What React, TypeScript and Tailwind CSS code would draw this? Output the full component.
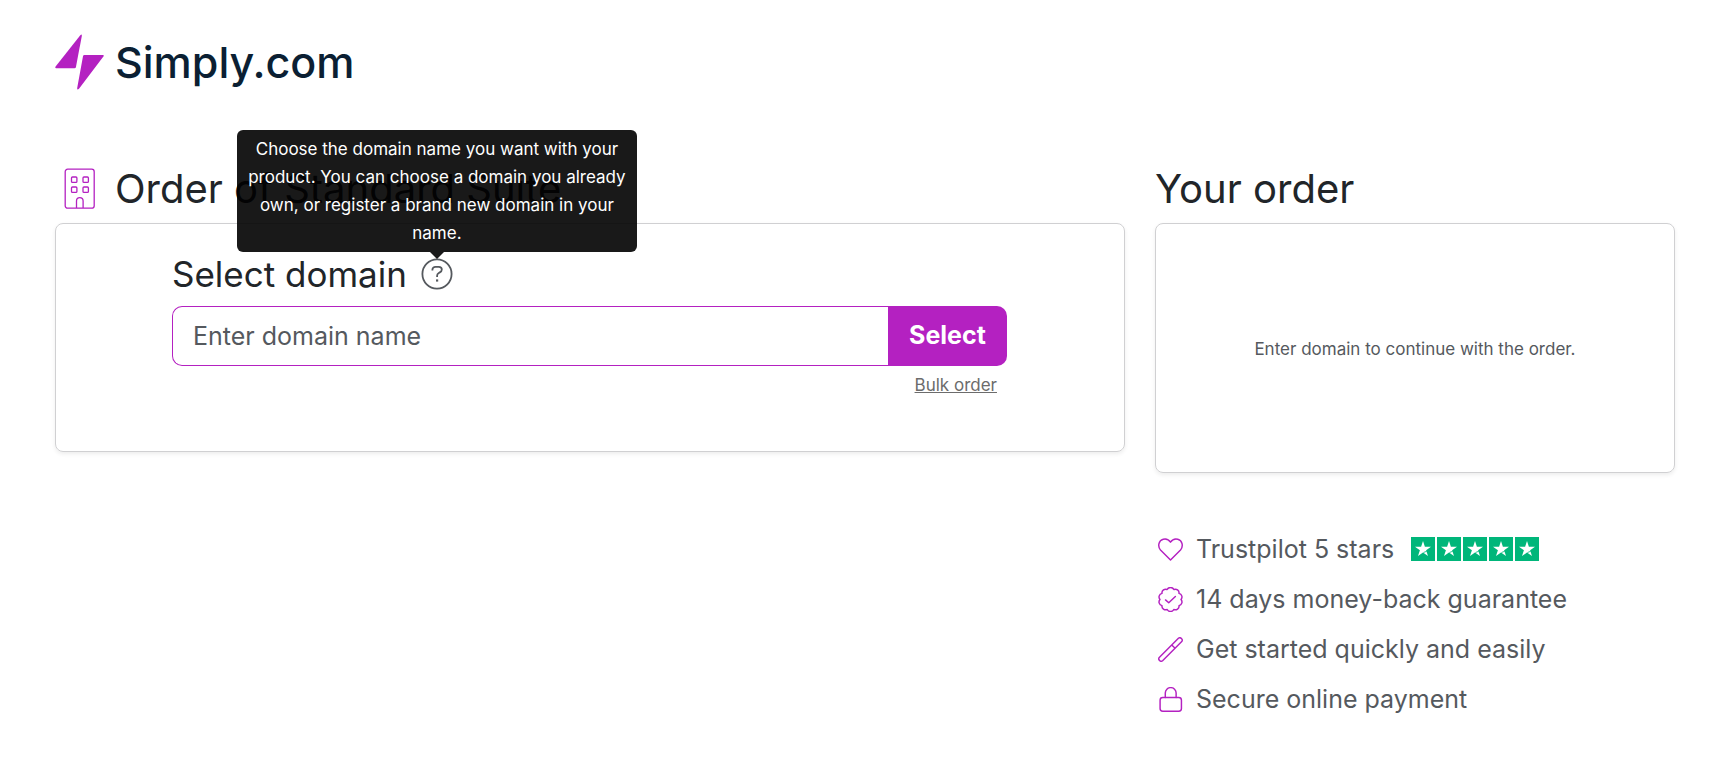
import { useState, type ReactNode } from 'react';

const iconProps = {
  viewBox: '0 0 24 24',
  fill: 'none',
  stroke: 'currentColor',
  strokeWidth: 1.4,
  strokeLinecap: 'round',
  strokeLinejoin: 'round',
  'aria-hidden': true,
} as const;

function LogoMark() {
  return (
    <svg viewBox="0 0 49 56" className="h-14 w-[49px] shrink-0 fill-[#b421c1]" aria-hidden="true">
      <path d="M25.3 1.2Q27 -.5 26.8 2L20.9 33.2Q20.6 34.2 19.5 34.2H1.2Q-.3 34 .6 32.6Z" />
      <path d="M29.4 21H47.8Q49.5 21.2 48.4 22.6L24 54.7Q22 56.4 22.2 54L28 22.2Q28.2 21 29.4 21Z" />
    </svg>
  );
}

function BuildingIcon() {
  return (
    <svg viewBox="0 0 32 42" className="h-[42px] w-8 shrink-0 text-[#b421c1]" fill="none" stroke="currentColor" strokeWidth="1.3" aria-hidden="true">
      <rect x="1.2" y="1.2" width="29" height="39" rx="2.5" />
      <rect x="7.5" y="9" width="5.4" height="5.4" rx="1" />
      <rect x="19" y="9" width="5.4" height="5.4" rx="1" />
      <rect x="7.5" y="19" width="5.4" height="5.4" rx="1" />
      <rect x="19" y="19" width="5.4" height="5.4" rx="1" />
      <path d="M12.5 40v-7a3.3 3.3 0 0 1 6.6 0v7" />
    </svg>
  );
}

function HeartIcon() {
  return (
    <svg {...iconProps} className="size-[25px]">
      <path d="M12 22 2.4 12.4C-.6 9 .6 3.2 5 2.1 8 1.3 10.7 3 12 5c1.3-2 4-3.7 7-2.9 4.4 1.1 5.6 6.9 2.6 10.3Z" />
    </svg>
  );
}

function BadgeIcon() {
  return (
    <svg {...iconProps} className="size-[25px]">
      <path d="M8.8 2.4A3.6 3.6 0 0 1 15.200 2.400 3.600 3.600 0 0 1 20.200 6.100 3.600 3.600 0 0 1 22.100 12 3.600 3.600 0 0 1 20.200 17.900 3.600 3.600 0 0 1 15.200 21.600 3.600 3.600 0 0 1 8.800 21.600 3.600 3.600 0 0 1 3.800 17.900 3.600 3.600 0 0 1 1.900 12 3.600 3.600 0 0 1 3.800 6.100 3.600 3.600 0 0 1 8.800 2.400Z" />
      <path d="m7.2 12.4 3.1 2.7 6.4-6" />
    </svg>
  );
}

function WandIcon() {
  return (
    <svg {...iconProps} className="size-[25px]">
      <path d="M1.2 19.6 19.6 1.2c2-1.5 4.7 1.2 3.2 3.2L4.4 22.8c-2 1.5-4.7-1.2-3.2-3.2ZM13.2 7.600l3.200 3.200" />
    </svg>
  );
}

function LockIcon() {
  return (
    <svg {...iconProps} className="size-[25px]">
      <rect x="2" y="10" width="20.5" height="13.2" rx="2.6" />
      <path d="M7 10V5.8a5.200 5.200 0 0 1 10.400 0V10" />
    </svg>
  );
}

function Stars() {
  return (
    <span className="ml-[17px] flex gap-[2px]" role="img" aria-label="5 out of 5 stars">
      {[1, 2, 3, 4, 5].map((n) => (
        <svg key={n} viewBox="0 0 24 24" className="size-6 bg-[#00b67a]" aria-hidden="true">
          <path fill="#fff" d="m12 4 1.9 5.700H20l-4.900 3.600 1.900 5.800-5-3.600-5 3.600 1.900-5.800L4 9.700h6.100Z" />
          <path stroke="#00b67a" strokeWidth=".8" d="m12.5 15.500 3.300-1.300" />
        </svg>
      ))}
    </span>
  );
}

function HelpTip({ text }: { text: string }) {
  return (
    <span className="relative flex">
      <button
        type="button"
        aria-label="Help"
        aria-describedby="domain-tip"
        className="flex size-8 text-[#55595e]"
      >
        <svg viewBox="0 0 32 32" className="size-8" fill="none" stroke="currentColor" strokeWidth="1.8" aria-hidden="true">
          <circle cx="16" cy="16" r="14.6" />
          <path d="M11.4 12.500v-.8c0-1.800 1.300-2.900 3.100-2.900h3.300c1.800 0 3 1.100 3 2.700 0 1.400-.7 2.200-2 2.900l-1 .6c-1.200.7-1.700 1.400-1.700 2.700v1.300" />
          <path d="M15 21.4h2.200v2.200H15z" fill="currentColor" stroke="none" />
        </svg>
      </button>
      <span
        id="domain-tip"
        role="tooltip"
        className="absolute bottom-full left-1/2 z-10 mb-[6px] w-[400px] -translate-x-1/2 rounded-md bg-black/90 px-2 py-[5px] text-center text-[17px] leading-7 font-normal text-white"
      >
        {text}
        <span className="absolute top-full left-1/2 -translate-x-1/2 border-x-[7px] border-t-[7px] border-x-transparent border-t-black/90" />
      </span>
    </span>
  );
}

const benefits: { icon: ReactNode; text: string; stars?: boolean }[] = [
  { icon: <HeartIcon />, text: 'Trustpilot 5 stars', stars: true },
  { icon: <BadgeIcon />, text: '14 days money-back guarantee' },
  { icon: <WandIcon />, text: 'Get started quickly and easily' },
  { icon: <LockIcon />, text: 'Secure online payment' },
];

export default function App() {
  const [domain, setDomain] = useState('');

  return (
    <div className="bg-white pt-[34px] pr-7 pb-10 pl-10 font-['Inter',sans-serif] text-[#212529]">
      <header className="px-[15px]">
        <a href="#" className="inline-flex items-center gap-[11px] text-[#0b1f33]">
          <LogoMark />
          <span className="text-[43px] leading-[54px] font-medium">Simply.com</span>
        </a>
      </header>

      <div className="mt-[69px] flex">
        <main className="w-2/3 px-[15px]">
          <div className="mb-[10px] flex h-12 items-center gap-[19px] pl-[9px]">
            <BuildingIcon />
            <h1 className="text-[40px] leading-[48px]">Order of Standard Suite</h1>
          </div>
          <section className="rounded-lg border border-[#d0d0d2] pt-[30px] pr-[117px] pb-[52px] pl-[116px] shadow-[0_2px_4px_rgba(0,0,0,0.075)]">
            <div className="flex items-center gap-[14px]">
              <h2 className="text-[35px] leading-10">
                <label htmlFor="domain">Select domain</label>
              </h2>
              <HelpTip text="Choose the domain name you want with your product. You can choose a domain you already own, or register a brand new domain in your name." />
            </div>
            <form className="mt-3 flex" onSubmit={(e) => e.preventDefault()}>
              <input
                id="domain"
                type="text"
                value={domain}
                onChange={(e) => setDomain(e.target.value)}
                placeholder="Enter domain name"
                className="h-15 min-w-0 flex-1 rounded-l-[10px] border border-r-0 border-[#b421c1] px-5 text-[25px] placeholder:text-[#55595e] focus:outline-none"
              />
              <button type="submit" className="h-15 w-[119px] rounded-r-[10px] bg-[#b421c1] text-[25px] font-bold text-white">
                Select
              </button>
            </form>
            <div className="mt-[5px] flex justify-end pr-[10px]">
              <a href="#" className="text-[17px] leading-7 text-[#6c6c6c] underline">
                Bulk order
              </a>
            </div>
          </section>
        </main>

        <aside className="w-1/3 px-[15px]">
          <h2 className="mb-[10px] text-[40px] leading-[48px]">Your order</h2>
          <div className="flex h-[250px] items-center justify-center rounded-lg border border-[#d0d0d2] pt-[3px] text-[17px] text-[#55595e] shadow-[0_2px_4px_rgba(0,0,0,0.075)]">
            Enter domain to continue with the order.
          </div>
          <ul className="mt-[58px] flex flex-col gap-[14px] pl-[3px]">
            {benefits.map(({ icon, text, stars }) => (
              <li key={text} className="flex items-center text-[#b421c1]">
                {icon}
                <span className="ml-[13px] text-[25px] leading-9 text-[#55595e]">{text}</span>
                {stars && <Stars />}
              </li>
            ))}
          </ul>
        </aside>
      </div>
    </div>
  );
}
